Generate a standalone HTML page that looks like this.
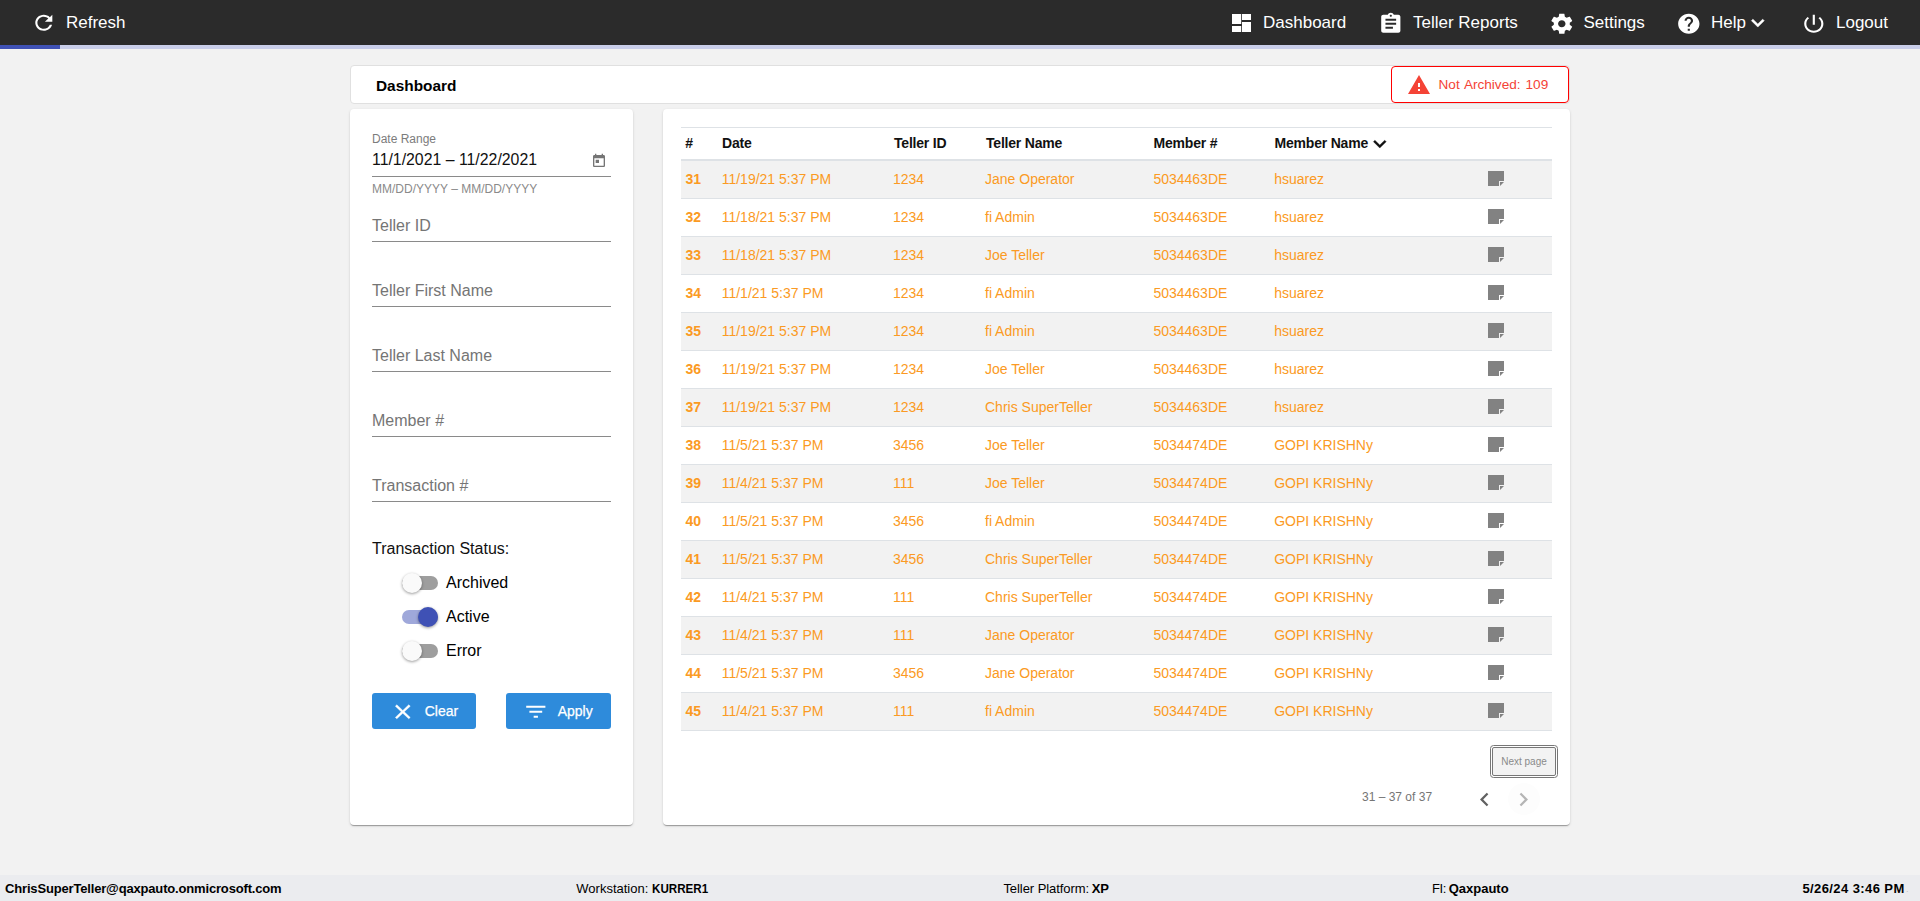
<!DOCTYPE html>
<html>
<head>
<meta charset="utf-8">
<title>Dashboard</title>
<style>
*{box-sizing:border-box;margin:0;padding:0}
html,body{width:1920px;height:901px;overflow:hidden;background:#f2f2f2;font-family:"Liberation Sans",sans-serif;color:#000}
.abs{position:absolute}
#hdr{position:absolute;left:0;top:0;width:1920px;height:44.8px;background:#2b2b2b}
#prog{position:absolute;left:0;top:44.8px;width:1920px;height:4px;background:#c9cee9}
#prog i{position:absolute;left:0;top:0;width:60px;height:4px;background:#3f51b5}
.nav{position:absolute;top:0;height:45px;color:#fff;font-size:17px;line-height:45px;white-space:nowrap}
.nav svg{position:absolute;fill:#fff}
.nav svg.h,.btn svg{transform:scaleY(.94)}
.nav span{position:absolute;top:0}
.card{position:absolute;background:#fff;border-radius:4px}
#title{left:350px;top:65px;width:1220px;height:39px;border:1px solid #e0e0e0}
#title b{position:absolute;left:25px;top:0;line-height:40px;font-size:15.4px;font-weight:bold}
#na{position:absolute;left:1391px;top:66px;width:178px;height:37px;border:1px solid #f00;border-radius:4px;background:#fff;color:#f44336;font-size:13.6px;line-height:36px;word-spacing:1.200px}
#left{left:350px;top:109px;width:283px;height:716px;box-shadow:0 2px 1px -1px rgba(0,0,0,.2),0 1px 1px 0 rgba(0,0,0,.14),0 1px 3px 0 rgba(0,0,0,.12)}
#right{left:663px;top:109px;width:907px;height:716px;box-shadow:0 2px 1px -1px rgba(0,0,0,.2),0 1px 1px 0 rgba(0,0,0,.14),0 1px 3px 0 rgba(0,0,0,.12)}
.fld{position:absolute;left:22px;width:239px;border-bottom:1px solid #8a8a8a;color:#757575;font-size:16px}
.fld span{position:absolute;left:0;bottom:6px;white-space:nowrap}
table{position:absolute;left:18px;top:18px;width:871px;border-collapse:separate;border-spacing:0;font-size:14px}
th{height:34px;text-align:left;font-weight:bold;font-size:14px;letter-spacing:-.2px;color:#111;border-top:1px solid #dee2e6;border-bottom:2px solid #dee2e6;padding:0 0 1px 5px;white-space:nowrap}
td{height:38px;color:#fb9a23;border-bottom:1px solid #dee2e6;padding:0 0 2px 4px;white-space:nowrap}
td:nth-child(1){padding-left:4.500px}
td:nth-child(2){padding-left:4.700px}
th:nth-child(1){padding-left:4.300px}
th:nth-child(5),th:nth-child(6){padding-left:3.500px}
tr.o td{background:#f2f2f2}
td.n{font-weight:bold}
svg.nt{display:block}
td:nth-child(5){padding-left:3.400px}
td:nth-child(6){padding-left:3.200px}
#foot{position:absolute;left:0;top:875px;width:1920px;height:26px;background:#ebecef;font-size:13px;line-height:26px}
#foot span{position:absolute;top:1px;white-space:nowrap}
.sw{position:absolute;left:52px;width:36px;height:14px;border-radius:7px;background:#9e9e9e}
.sw i{position:absolute;left:-.3px;top:-3px;width:20px;height:20px;border-radius:10px;background:#fafafa;box-shadow:0 1px 3px rgba(0,0,0,.4)}
.sw.on{background:#9fa8da}
.sw.on i{left:16.200px;background:#3f51b5}
.swl{position:absolute;left:96px;font-size:16px;line-height:20px}
.btn{position:absolute;top:584px;height:36px;background:#2e8bdb;border-radius:3px;color:#fff;font-size:14px;line-height:36px}
</style>
</head>
<body>
<div id="hdr"></div>
<div id="prog"><i></i></div>

<div class="nav" style="left:0"><svg class="h" style="left:31px;top:10.100px" width="25.6" height="25.6" viewBox="0 0 24 24"><path d="M17.65 6.35C16.2 4.9 14.21 4 12 4c-4.42 0-7.99 3.58-7.99 8s3.57 8 7.99 8c3.73 0 6.84-2.55 7.73-6h-2.08c-.82 2.33-3.04 4-5.65 4-3.31 0-6-2.69-6-6s2.69-6 6-6c1.66 0 3.14.69 4.22 1.78L13 11h7V4l-2.35 2.35z"/></svg><span style="left:66px">Refresh</span></div>
<div class="nav" style="left:0"><svg style="left:1232px;top:14px" width="19" height="18" viewBox="0 0 19 18"><path d="M0 0h9.200v10H0zM0 12h9.200v6H0zM10 0h9v6h-9zM10 8h9v10h-9z"/></svg><span style="left:1263px">Dashboard</span></div>
<div class="nav" style="left:0"><svg class="h" style="left:1378.050px;top:10.500px" width="25.6" height="25.6" viewBox="0 0 24 24"><path d="M19 3h-4.18C14.4 1.84 13.3 1 12 1c-1.3 0-2.4.84-2.82 2H5c-1.1 0-2 .9-2 2v14c0 1.1.9 2 2 2h14c1.1 0 2-.9 2-2V5c0-1.1-.9-2-2-2zm-7 0c.55 0 1 .45 1 1s-.45 1-1 1-1-.45-1-1 .45-1 1-1zm2 14H7v-2h7v2zm3-4H7v-2h10v2zm0-4H7V7h10v2z"/></svg><span style="left:1413px">Teller Reports</span></div>
<div class="nav" style="left:0"><svg class="h" style="left:1548.800px;top:10.800px" width="25.6" height="25.6" viewBox="0 0 24 24"><path d="M19.43 12.98c.04-.32.07-.64.07-.98s-.03-.66-.07-.98l2.11-1.65c.19-.15.24-.42.12-.64l-2-3.46c-.12-.22-.39-.3-.61-.22l-2.49 1c-.52-.4-1.08-.73-1.69-.98l-.38-2.65C14.46 2.18 14.25 2 14 2h-4c-.25 0-.46.18-.49.42l-.38 2.65c-.61.25-1.17.59-1.69.98l-2.49-1c-.23-.09-.49 0-.61.22l-2 3.46c-.13.22-.07.49.12.64l2.11 1.65c-.04.32-.07.65-.07.98s.03.66.07.98l-2.11 1.65c-.19.15-.24.42-.12.64l2 3.46c.12.22.39.3.61.22l2.49-1c.52.4 1.08.73 1.69.98l.38 2.65c.03.24.24.42.49.42h4c.25 0 .46-.18.49-.42l.38-2.65c.61-.25 1.17-.59 1.69-.98l2.49 1c.23.09.49 0 .61-.22l2-3.46c.12-.22.07-.49-.12-.64l-2.11-1.65zM12 15.5c-1.93 0-3.5-1.57-3.5-3.5s1.57-3.5 3.5-3.5 3.5 1.57 3.5 3.5-1.57 3.5-3.5 3.5z"/></svg><span style="left:1583.4px">Settings</span></div>
<div class="nav" style="left:0"><svg class="h" style="left:1676.400px;top:10.900px" width="25.6" height="25.6" viewBox="0 0 24 24"><path d="M12 2C6.48 2 2 6.48 2 12s4.48 10 10 10 10-4.48 10-10S17.52 2 12 2zm1 17h-2v-2h2v2zm2.07-7.75l-.9.92C13.45 12.9 13 13.5 13 15h-2v-.5c0-1.1.45-2.1 1.17-2.83l1.24-1.26c.37-.36.59-.86.59-1.41 0-1.1-.9-2-2-2s-2 .9-2 2H8c0-2.21 1.79-4 4-4s4 1.79 4 4c0 .88-.36 1.68-.93 2.25z"/></svg><span style="left:1711px">Help</span><svg style="left:1745.2px;top:10.0px" width="25.6" height="25.6" viewBox="0 0 24 24"><path d="M7.41 8.59L12 13.17l4.59-4.58L18 10l-6 6-6-6 1.41-1.41z" stroke="#fff" stroke-width=".5"/></svg></div>
<div class="nav" style="left:0"><svg class="h" style="left:1801.400px;top:11px" width="25.6" height="25.6" viewBox="0 0 24 24"><path d="M13 3h-2v10h2V3zm4.83 2.17l-1.42 1.42C17.99 7.86 19 9.81 19 12c0 3.87-3.13 7-7 7s-7-3.130-7-7c0-2.19 1.01-4.14 2.58-5.42L6.17 5.17C4.23 6.82 3 9.26 3 12c0 4.97 4.03 9 9 9s9-4.03 9-9c0-2.74-1.23-5.18-3.17-6.83z"/></svg><span style="left:1836px">Logout</span></div>

<div class="card" id="title"><b>Dashboard</b></div>
<div id="na"><svg class="abs" style="left:14.6px;top:6.050px;fill:#f44336" width="24" height="24" viewBox="0 0 24 24"><path d="M1 21h22L12 2 1 21zm12-3h-2v-2h2v2zm0-4h-2v-4h2v4z"/></svg><span class="abs" style="left:46.500px;top:.45px;white-space:nowrap">Not Archived: 109</span></div>

<div class="card" id="left">
  <div class="abs" style="left:22px;top:22.600px;font-size:12px;color:#7c7c7c">Date Range</div>
  <div class="abs" style="left:22px;top:42px;font-size:15.850px;color:#111;white-space:nowrap">11/1/2021 – 11/22/2021</div>
  <svg class="abs" style="left:240.600px;top:43.500px;fill:#757575" width="16" height="16" viewBox="0 0 24 24"><path d="M19 3h-1V1h-2v2H8V1H6v2H5c-1.110 0-1.990.9-1.990 2L3 19c0 1.100.89 2 2 2h14c1.100 0 2-.9 2-2V5c0-1.100-.9-2-2-2zm0 16H5V8h14v11zM7 10h5v5H7z"/></svg>
  <div class="abs" style="left:22px;top:67px;width:239px;height:1px;background:#8a8a8a"></div>
  <div class="abs" style="left:22px;top:73px;font-size:12px;color:#8a8a8a;white-space:nowrap">MM/DD/YYYY – MM/DD/YYYY</div>
  <div class="fld" style="top:101px;height:32px"><span>Teller ID</span></div>
  <div class="fld" style="top:166px;height:32px"><span>Teller First Name</span></div>
  <div class="fld" style="top:231px;height:32px"><span>Teller Last Name</span></div>
  <div class="fld" style="top:296px;height:32px"><span>Member #</span></div>
  <div class="fld" style="top:361px;height:32px"><span>Transaction #</span></div>
  <div class="abs" style="left:22px;top:431px;font-size:16px;color:#111;white-space:nowrap">Transaction Status:</div>
  <div class="sw" style="top:467px"><i></i></div><div class="swl" style="top:464px">Archived</div>
  <div class="sw on" style="top:501px"><i></i></div><div class="swl" style="top:498px">Active</div>
  <div class="sw" style="top:535px"><i></i></div><div class="swl" style="top:532px">Error</div>
  <div class="btn" style="left:22px;width:104px"><svg class="abs" style="left:17.700px;top:6.200px;fill:#fff;stroke:#fff;stroke-width:.4" width="25.600" height="25.600" viewBox="0 0 24 24"><path d="M19 6.410L17.590 5 12 10.590 6.410 5 5 6.410 10.590 12 5 17.590 6.410 19 12 13.410 17.590 19 19 17.590 13.410 12z"/></svg><span class="abs" style="left:52.700px;top:0;-webkit-text-stroke:.25px #fff">Clear</span></div>
  <div class="btn" style="left:156px;width:105px"><svg class="abs" style="left:17.200px;top:6px;fill:#fff" width="25.600" height="25.600" viewBox="0 0 24 24"><path d="M10 18h4v-2h-4v2zM3 6v2h18V6H3zm3 7h12v-2H6v2z"/></svg><span class="abs" style="left:51.700px;top:0;-webkit-text-stroke:.25px #fff">Apply</span></div>
</div>

<div class="card" id="right">
<table>
<colgroup><col style="width:36px"><col style="width:172px"><col style="width:92px"><col style="width:169px"><col style="width:121px"><col style="width:213px"><col></colgroup>
<tr><th>#</th><th>Date</th><th>Teller ID</th><th>Teller Name</th><th>Member #</th><th>Member Name</th><th></th></tr>
<tr class="o"><td class="n">31</td><td>11/19/21 5:37 PM</td><td>1234</td><td>Jane Operator</td><td>5034463DE</td><td>hsuarez</td><td><svg class="nt" width="16" height="15" viewBox="0 0 16 15"><path d="M0 0h16v10h-5v5H0z M12 11h4l-4 4z" fill="#828282"/></svg></td></tr>
<tr><td class="n">32</td><td>11/18/21 5:37 PM</td><td>1234</td><td>fi Admin</td><td>5034463DE</td><td>hsuarez</td><td><svg class="nt" width="16" height="15" viewBox="0 0 16 15"><path d="M0 0h16v10h-5v5H0z M12 11h4l-4 4z" fill="#828282"/></svg></td></tr>
<tr class="o"><td class="n">33</td><td>11/18/21 5:37 PM</td><td>1234</td><td>Joe Teller</td><td>5034463DE</td><td>hsuarez</td><td><svg class="nt" width="16" height="15" viewBox="0 0 16 15"><path d="M0 0h16v10h-5v5H0z M12 11h4l-4 4z" fill="#828282"/></svg></td></tr>
<tr><td class="n">34</td><td>11/1/21 5:37 PM</td><td>1234</td><td>fi Admin</td><td>5034463DE</td><td>hsuarez</td><td><svg class="nt" width="16" height="15" viewBox="0 0 16 15"><path d="M0 0h16v10h-5v5H0z M12 11h4l-4 4z" fill="#828282"/></svg></td></tr>
<tr class="o"><td class="n">35</td><td>11/19/21 5:37 PM</td><td>1234</td><td>fi Admin</td><td>5034463DE</td><td>hsuarez</td><td><svg class="nt" width="16" height="15" viewBox="0 0 16 15"><path d="M0 0h16v10h-5v5H0z M12 11h4l-4 4z" fill="#828282"/></svg></td></tr>
<tr><td class="n">36</td><td>11/19/21 5:37 PM</td><td>1234</td><td>Joe Teller</td><td>5034463DE</td><td>hsuarez</td><td><svg class="nt" width="16" height="15" viewBox="0 0 16 15"><path d="M0 0h16v10h-5v5H0z M12 11h4l-4 4z" fill="#828282"/></svg></td></tr>
<tr class="o"><td class="n">37</td><td>11/19/21 5:37 PM</td><td>1234</td><td>Chris SuperTeller</td><td>5034463DE</td><td>hsuarez</td><td><svg class="nt" width="16" height="15" viewBox="0 0 16 15"><path d="M0 0h16v10h-5v5H0z M12 11h4l-4 4z" fill="#828282"/></svg></td></tr>
<tr><td class="n">38</td><td>11/5/21 5:37 PM</td><td>3456</td><td>Joe Teller</td><td>5034474DE</td><td>GOPI KRISHNy</td><td><svg class="nt" width="16" height="15" viewBox="0 0 16 15"><path d="M0 0h16v10h-5v5H0z M12 11h4l-4 4z" fill="#828282"/></svg></td></tr>
<tr class="o"><td class="n">39</td><td>11/4/21 5:37 PM</td><td>111</td><td>Joe Teller</td><td>5034474DE</td><td>GOPI KRISHNy</td><td><svg class="nt" width="16" height="15" viewBox="0 0 16 15"><path d="M0 0h16v10h-5v5H0z M12 11h4l-4 4z" fill="#828282"/></svg></td></tr>
<tr><td class="n">40</td><td>11/5/21 5:37 PM</td><td>3456</td><td>fi Admin</td><td>5034474DE</td><td>GOPI KRISHNy</td><td><svg class="nt" width="16" height="15" viewBox="0 0 16 15"><path d="M0 0h16v10h-5v5H0z M12 11h4l-4 4z" fill="#828282"/></svg></td></tr>
<tr class="o"><td class="n">41</td><td>11/5/21 5:37 PM</td><td>3456</td><td>Chris SuperTeller</td><td>5034474DE</td><td>GOPI KRISHNy</td><td><svg class="nt" width="16" height="15" viewBox="0 0 16 15"><path d="M0 0h16v10h-5v5H0z M12 11h4l-4 4z" fill="#828282"/></svg></td></tr>
<tr><td class="n">42</td><td>11/4/21 5:37 PM</td><td>111</td><td>Chris SuperTeller</td><td>5034474DE</td><td>GOPI KRISHNy</td><td><svg class="nt" width="16" height="15" viewBox="0 0 16 15"><path d="M0 0h16v10h-5v5H0z M12 11h4l-4 4z" fill="#828282"/></svg></td></tr>
<tr class="o"><td class="n">43</td><td>11/4/21 5:37 PM</td><td>111</td><td>Jane Operator</td><td>5034474DE</td><td>GOPI KRISHNy</td><td><svg class="nt" width="16" height="15" viewBox="0 0 16 15"><path d="M0 0h16v10h-5v5H0z M12 11h4l-4 4z" fill="#828282"/></svg></td></tr>
<tr><td class="n">44</td><td>11/5/21 5:37 PM</td><td>3456</td><td>Jane Operator</td><td>5034474DE</td><td>GOPI KRISHNy</td><td><svg class="nt" width="16" height="15" viewBox="0 0 16 15"><path d="M0 0h16v10h-5v5H0z M12 11h4l-4 4z" fill="#828282"/></svg></td></tr>
<tr class="o"><td class="n">45</td><td>11/4/21 5:37 PM</td><td>111</td><td>fi Admin</td><td>5034474DE</td><td>GOPI KRISHNy</td><td><svg class="nt" width="16" height="15" viewBox="0 0 16 15"><path d="M0 0h16v10h-5v5H0z M12 11h4l-4 4z" fill="#828282"/></svg></td></tr>
</table>
<svg class="abs" style="left:704.400px;top:21.640px" width="25.600" height="25.600" viewBox="0 0 24 24"><path d="M7.410 8.590L12 13.170l4.590-4.580L18 10l-6 6-6-6 1.410-1.410z" fill="#111" stroke="#111" stroke-width=".3"/></svg>
<div class="abs" style="left:827px;top:636px;width:68px;height:33px;border:1px solid #777;border-radius:3.500px;background:#fff"><div class="abs" style="left:1px;top:1px;width:64px;height:29px;border:1px solid #777;border-radius:2px;background:#f3f3f3;font-size:10px;line-height:28px;text-align:center;color:#8a8a8a">Next page</div></div>
<div class="abs" style="left:699px;top:681px;font-size:12px;color:#757575;white-space:nowrap">31 – 37 of 37</div>
<div class="abs" style="left:845px;top:674px;width:32px;height:32px;border-radius:16px;background:#fdfdfd"></div>
<svg class="abs" style="left:807.700px;top:676.600px;fill:#616161" width="27" height="27" viewBox="0 0 24 24"><path d="M15.410 7.410L14 6l-6 6 6 6 1.410-1.410L10.830 12z"/></svg>
<svg class="abs" style="left:847.400px;top:676.600px;fill:#b5b5b5" width="27" height="27" viewBox="0 0 24 24"><path d="M10 6L8.590 7.410 13.170 12l-4.580 4.590L10 18l6-6z"/></svg>
</div>

<div id="foot">
<span style="left:5px;font-weight:bold;letter-spacing:-.167px">ChrisSuperTeller@qaxpauto.onmicrosoft.com</span>
<span style="left:576.300px">Workstation:</span><span style="left:651.800px;font-weight:bold;transform:scaleX(.894);transform-origin:0 0">KURRER1</span>
<span style="left:1003.400px;letter-spacing:-.06px">Teller Platform:</span><span style="left:1091.700px;font-weight:bold">XP</span>
<span style="left:1432px;letter-spacing:-.4px">FI:</span><span style="left:1448.700px;font-weight:bold">Qaxpauto</span>
<span style="left:1802.400px;font-weight:bold;letter-spacing:.41px">5/26/24 3:46 PM</span>
<span style="left:1906px;color:#c0c0c0;font-size:9px">.</span>
</div>
</body>
</html>
